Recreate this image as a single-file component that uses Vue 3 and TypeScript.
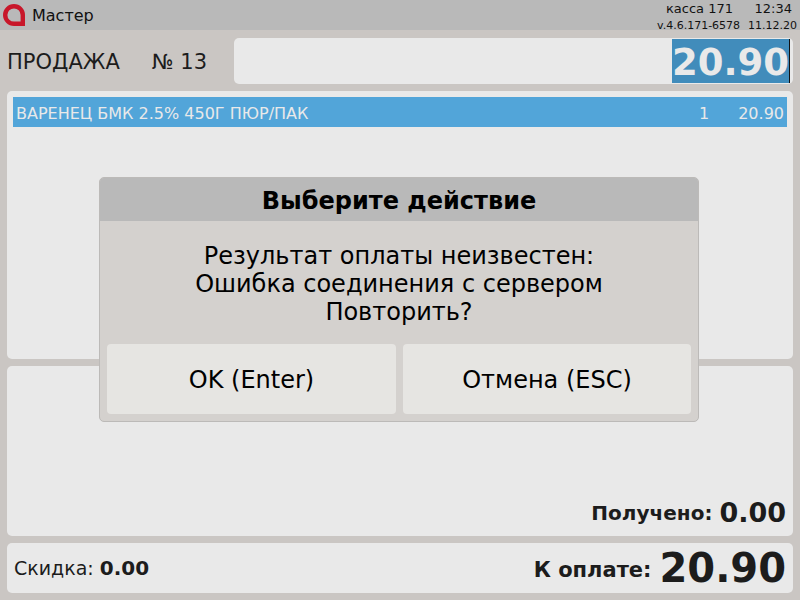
<template>
  <div class="screen">
    <header class="topbar">
      <div class="brand">
        <svg class="logo" width="22" height="22" viewBox="0 0 22 22">
          <path d="M11 2.2a8.8 8.8 0 0 0 0 17.6h8.8V11A8.8 8.8 0 0 0 11 2.2z" fill="none" stroke="#c8172a" stroke-width="4.4" />
        </svg>
        <span>Мастер</span>
      </div>
      <div class="info">
        <div class="info-top"><span>касса 171</span><span>12:34</span></div>
        <div class="info-bottom"><span>v.4.6.171-6578</span><span>11.12.20</span></div>
      </div>
    </header>

    <div class="sale-row">
      <div class="sale-title"><span>ПРОДАЖА</span><span>№ 13</span></div>
      <div class="sale-input"><span class="selected">20.90</span></div>
    </div>

    <section class="panel items">
      <div v-for="item in items" :key="item.name" class="item">
        <span class="item-name">{{ item.name }}</span>
        <span class="item-qty">{{ item.qty }}</span>
        <span class="item-sum">{{ item.sum }}</span>
      </div>
    </section>

    <section class="panel received">
      <span class="label">Получено:</span>
      <span class="received-sum">0.00</span>
    </section>

    <section class="panel totals">
      <div class="discount">Скидка: <b>0.00</b></div>
      <div class="to-pay"><span class="label pay-label">К оплате:</span><span class="total">20.90</span></div>
    </section>

    <div class="dialog">
      <div class="dialog-title">Выберите действие</div>
      <div class="dialog-text">
        <div v-for="line in lines" :key="line">{{ line }}</div>
      </div>
      <div class="dialog-buttons">
        <button>OK (Enter)</button>
        <button>Отмена (ESC)</button>
      </div>
    </div>
  </div>
</template>

<script setup lang="ts">
const items = [{ name: 'ВАРЕНЕЦ БМК 2.5% 450Г ПЮР/ПАК', qty: 1, sum: '20.90' }]

const lines = ['Результат оплаты неизвестен:', 'Ошибка соединения с сервером', 'Повторить?']
</script>

<style>
body {
  background: #cac6c3;
}
</style>

<style scoped>
.screen {
  position: relative;
  width: 800px;
  height: 600px;
  overflow: hidden;
  background: #cac6c3;
  color: #1c1c1c;
  font-family: "DejaVu Sans", sans-serif;
}
.topbar {
  display: flex;
  justify-content: space-between;
  height: 30px;
  background: #b9b9b9;
}
.brand {
  display: flex;
  align-items: center;
  gap: 7px;
  padding-left: 3px;
  font-size: 16px;
  line-height: 22px;
  color: #111;
}
.brand span {
  padding-top: 2px;
}
.info {
  width: 140px;
  margin-right: 3px;
  color: #111;
}
.info-top {
  display: flex;
  justify-content: space-between;
  padding: 2px 5px 0 9px;
  font-size: 13px;
  line-height: 14px;
}
.info-bottom {
  display: flex;
  justify-content: space-between;
  margin-top: 3px;
  font-size: 11px;
  line-height: 13px;
}
.sale-row {
  display: flex;
  align-items: center;
  height: 46px;
  margin-top: 8px;
  padding: 0 7px;
}
.sale-title {
  display: flex;
  gap: 32px;
  width: 227px;
  padding-top: 2px;
  font-size: 21px;
}
.sale-input {
  flex: 1;
  display: flex;
  justify-content: flex-end;
  height: 46px;
  padding: 1px 3px 1px 0;
  box-sizing: border-box;
  background: #e9e9e9;
  border-radius: 5px;
}
.selected {
  width: 118px;
  padding-top: 2px;
  box-sizing: border-box;
  background: #418cbb;
  border-right: 1px solid #111;
  color: #e9e9e9;
  font-size: 37px;
  font-weight: bold;
  line-height: 44px;
  text-align: center;
}
.panel {
  margin: 7px 7px 0;
  background: #e9e9e9;
  border-radius: 5px;
}
.items {
  height: 268px;
  padding: 6px;
  box-sizing: border-box;
}
.item {
  display: flex;
  height: 30px;
  align-items: center;
  padding: 2px 3px 0;
  box-sizing: border-box;
  background: #52a5d9;
  color: #e9e9e9;
  font-size: 16px;
}
.item-name {
  flex: 1;
}
.item-qty {
  width: 39px;
}
.item-sum {
  width: 46px;
  text-align: right;
}
.received {
  display: flex;
  justify-content: flex-end;
  align-items: flex-end;
  gap: 7px;
  height: 170px;
  padding: 0 7px 7px 0;
  box-sizing: border-box;
}
.label {
  font-size: 20px;
  font-weight: bold;
  line-height: 32px;
}
.pay-label {
  padding-top: 4px;
  font-size: 21px;
  line-height: 26px;
}
.received-sum {
  font-size: 27px;
  font-weight: bold;
  line-height: 32px;
}
.totals {
  display: flex;
  justify-content: space-between;
  align-items: center;
  height: 50px;
  padding: 0 7px;
  box-sizing: border-box;
}
.discount {
  font-size: 19px;
}
.discount b {
  font-size: 20px;
}
.to-pay {
  display: flex;
  align-items: center;
  gap: 8px;
}
.total {
  font-size: 40px;
  font-weight: bold;
  line-height: 50px;
}
.dialog {
  position: absolute;
  left: 99px;
  top: 177px;
  width: 600px;
  height: 245px;
  box-sizing: border-box;
  background: #d4d1ce;
  border: 1px solid #bcbab8;
  border-radius: 5px;
  overflow: hidden;
  color: #000;
}
.dialog-title {
  height: 43px;
  background: #b9b9b9;
  font-size: 24px;
  font-weight: bold;
  line-height: 46px;
  text-align: center;
}
.dialog-text {
  height: 123px;
  padding-top: 21px;
  box-sizing: border-box;
  font-size: 24px;
  line-height: 28px;
  text-align: center;
}
.dialog-buttons {
  display: grid;
  grid-template-columns: 289px 288px;
  gap: 7px;
  padding: 0 7px;
}
.dialog-buttons button {
  height: 70px;
  padding: 2px 0 0;
  background: #e6e5e2;
  border: none;
  border-radius: 4px;
  color: #000;
  font-family: inherit;
  font-size: 24px;
}
</style>
